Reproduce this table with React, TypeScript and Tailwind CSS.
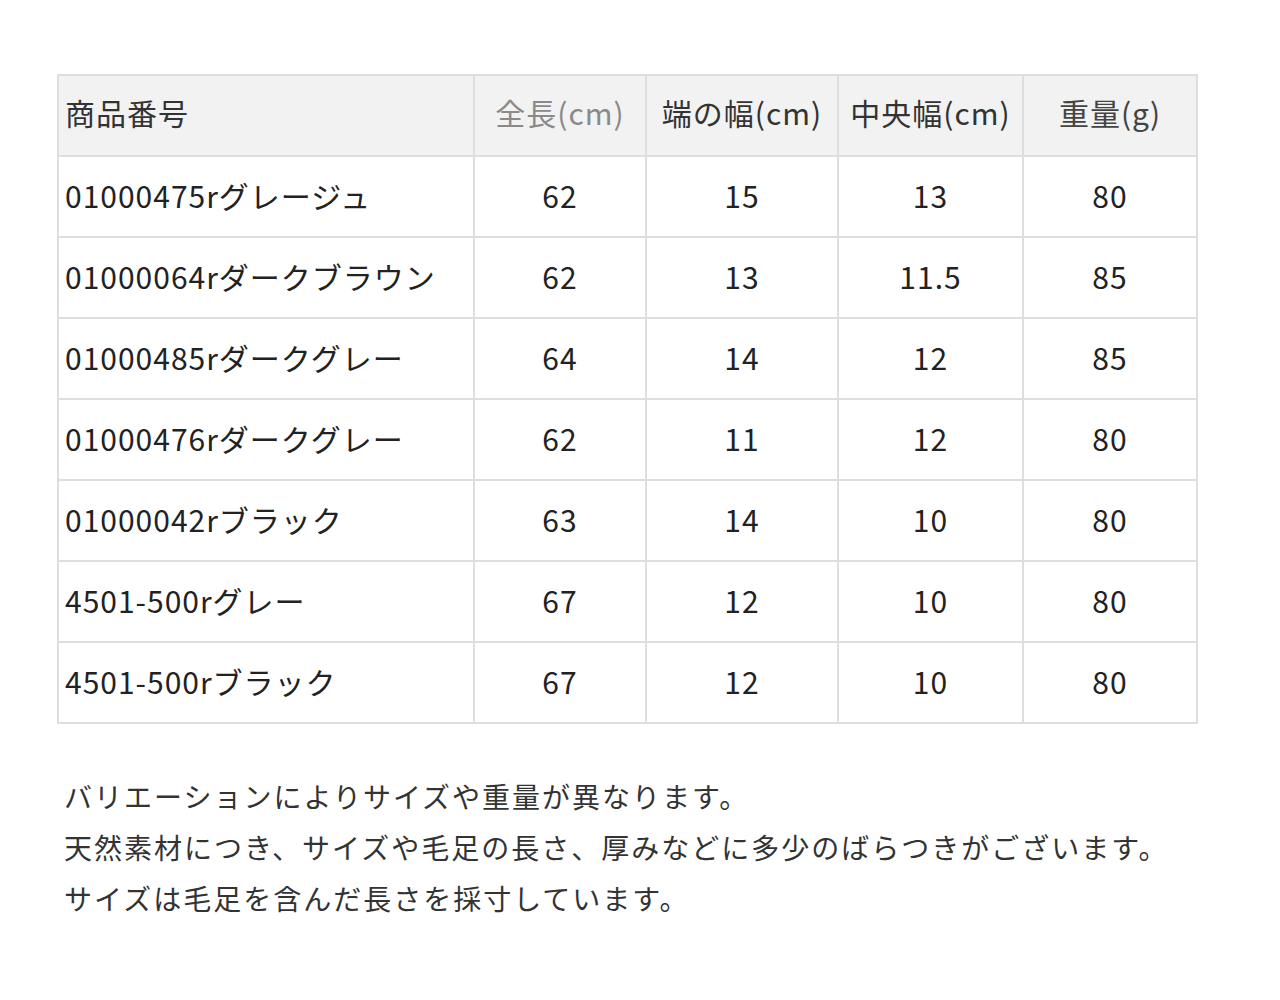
import React from 'react'

const headers = [
  { label: '商品番号', align: 'text-left', color: 'text-[#333]' },
  { label: '全長(cm)', align: 'text-center', color: 'text-[#8a8a8a]' },
  { label: '端の幅(cm)', align: 'text-center', color: 'text-[#333]' },
  { label: '中央幅(cm)', align: 'text-center', color: 'text-[#333]' },
  { label: '重量(g)', align: 'text-center', color: 'text-[#444]' },
]

const rows = [
  ['01000475rグレージュ', '62', '15', '13', '80'],
  ['01000064rダークブラウン', '62', '13', '11.5', '85'],
  ['01000485rダークグレー', '64', '14', '12', '85'],
  ['01000476rダークグレー', '62', '11', '12', '80'],
  ['01000042rブラック', '63', '14', '10', '80'],
  ['4501-500rグレー', '67', '12', '10', '80'],
  ['4501-500rブラック', '67', '12', '10', '80'],
]

const widths = ['w-[416px]', 'w-[172px]', 'w-[192px]', 'w-[185px]', 'w-[174px]']

export default function App() {
  return (
    <div className="min-h-[1000px] bg-white pt-[74px] pl-[57px] text-[#222] font-['Noto_Sans_CJK_JP','Noto_Sans',sans-serif]">
      {/* Size table */}
      <table className="w-[1140px] table-fixed border-collapse border-2 border-[#dedede] text-[30px] tracking-[1px]">
        <colgroup>
          {widths.map(w => <col key={w} className={w} />)}
        </colgroup>
        <thead>
          <tr className="h-[81px] bg-[#f2f2f2]">
            {headers.map(h => (
              <th
                key={h.label}
                className={`border-2 border-[#dedede] px-[6px] pb-[6px] font-normal whitespace-nowrap ${h.align} ${h.color}`}
              >
                {h.label}
              </th>
            ))}
          </tr>
        </thead>
        <tbody>
          {rows.map(r => (
            <tr key={r[0]} className="h-[81px]">
              {r.map((c, i) => (
                <td
                  key={i}
                  className={`border-2 border-[#dedede] px-[6px] pb-[3px] whitespace-nowrap ${i === 0 ? 'text-left' : 'text-center'}`}
                >
                  {c}
                </td>
              ))}
            </tr>
          ))}
        </tbody>
      </table>

      {/* Notes */}
      <div className="mt-[47px] pl-[7px] text-[28px] leading-[51px] tracking-[2px] text-[#333]">
        <p>バリエーションによりサイズや重量が異なります。</p>
        <p>天然素材につき、サイズや毛足の長さ、厚みなどに多少のばらつきがございます。</p>
        <p>サイズは毛足を含んだ長さを採寸しています。</p>
      </div>
    </div>
  )
}
